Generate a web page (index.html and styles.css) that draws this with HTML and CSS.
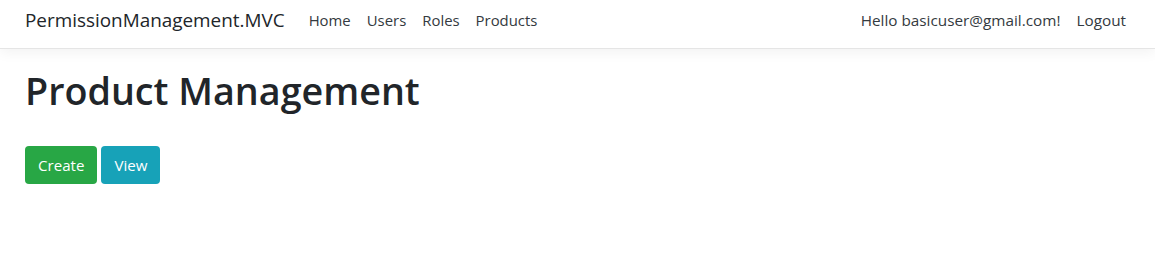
FILE: index.html
```html
<!DOCTYPE html>
<html lang="en">
<head>
<meta charset="utf-8">
<title>Product Management - PermissionManagement.MVC</title>
<link rel="stylesheet" href="styles.css">
</head>
<body>
<header class="navbar">
  <div class="nav-left">
    <a class="brand" href="#">PermissionManagement.MVC</a>
    <ul class="nav-links">
      <li><a href="#">Home</a></li>
      <li><a href="#">Users</a></li>
      <li><a href="#">Roles</a></li>
      <li><a href="#">Products</a></li>
    </ul>
  </div>
  <ul class="nav-right">
    <li><a href="#" class="hello">Hello basicuser@gmail.com!</a></li>
    <li><a href="#" class="logout">Logout</a></li>
  </ul>
</header>
<main class="content">
  <h1 class="title">Product Management</h1>
  <div class="actions">
    <a href="#" class="btn btn-success">Create</a>
    <a href="#" class="btn btn-info">View</a>
  </div>
</main>
</body>
</html>
```
FILE: styles.css
```css
* { box-sizing: border-box; }
html, body { margin: 0; padding: 0; background: #fff; }
body {
  font-family: "Segoe UI", "Open Sans", "Noto Sans", sans-serif;
  font-size: 16px;
  color: #212529;
}
a { text-decoration: none; }
ul { list-style: none; margin: 0; padding: 0; }

.navbar {
  height: 49px;
  display: flex;
  align-items: center;
  justify-content: space-between;
  padding: 0 21px 8px 25px;
  border-bottom: 1px solid #e5e5e5;
  box-shadow: 0 4px 12px rgba(0,0,0,.05);
}
.nav-left { display: flex; align-items: center; }
.brand {
  font-size: 18.9px;
  color: #212529;
  margin-right: 16px;
}
.nav-links { display: flex; }
.nav-links a, .nav-right a {
  display: block;
  padding: 0 8px;
  font-size: 14.9px;
  color: #343a40;
}
.nav-right { display: flex; align-items: center; }
.nav-right a { font-size: 15.3px; }
.nav-right .hello { padding-right: 8px; }

.content { padding: 0 25px; }
.title {
  margin: 18px 0 0;
  font-size: 37.7px;
  font-weight: 600;
  line-height: 48px;
  color: #212529;
}
.actions { display: flex; gap: 4px; margin-top: 31px; }
.btn {
  display: inline-block;
  height: 38px;
  line-height: 24px;
  padding: 7px 13px;
  border-radius: 4px;
  font-size: 15.1px;
  color: #fff;
}
.btn-success { background: #28a745; }
.btn-info { background: #17a2b8; }
```
